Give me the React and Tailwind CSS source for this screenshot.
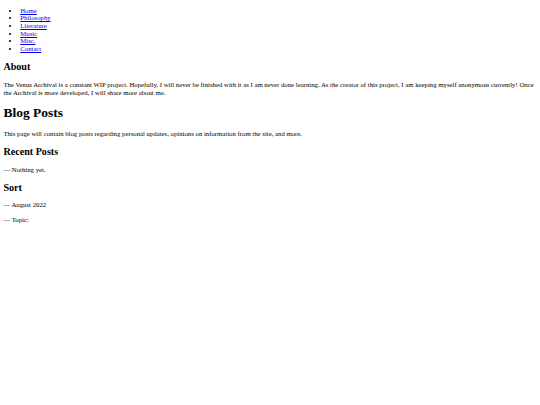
const NAV = ['Home', 'Philosophy', 'Literature', 'Music', 'Misc.', 'Contact']

const App = () => {
  return (
    <div className="mx-[3.375px] text-[6.75px] leading-[1.135] text-black bg-white font-['Liberation_Serif',serif]">
      {/* Nav */}
      <ul className="list-disc my-[6.75px] pl-[16.875px]">
        {NAV.map((item) => (
          <li key={item}>
            <a href="#" className="text-[#0000ee] underline">
              {item}
            </a>
          </li>
        ))}
      </ul>

      {/* About */}
      <h2 className="text-[10.125px] font-bold my-[8.4px]">About</h2>
      <p className="my-[6.75px]">
        The Venus Archival is a constant WIP project. Hopefully, I will never be finished with it as I am never done
        learning. As the creator of this project, I am keeping myself anonymous currently! Once the Archival is more
        developed, I will share more about me.
      </p>

      {/* Blog */}
      <h1 className="text-[13.5px] font-bold my-[9.045px]">Blog Posts</h1>
      <p className="my-[6.75px]">
        This page will contain blog posts regarding personal updates, opinions on information from the site, and more.
      </p>

      <h2 className="text-[10.125px] font-bold my-[8.4px]">Recent Posts</h2>
      <p className="my-[6.75px]">— Nothing yet.</p>

      <h2 className="text-[10.125px] font-bold my-[8.4px]">Sort</h2>
      <p className="my-[6.75px]">— August 2022</p>
      <p className="my-[6.75px]">— Topic:</p>
    </div>
  )
}

export default App
